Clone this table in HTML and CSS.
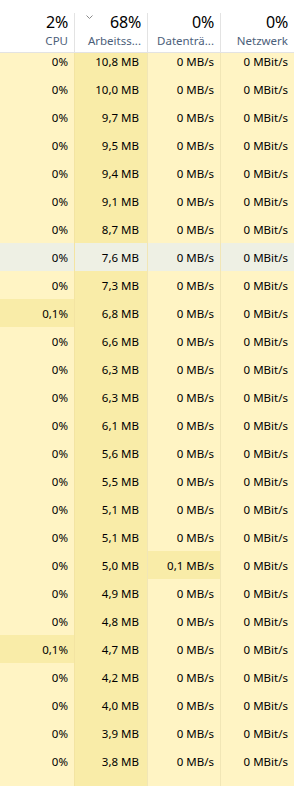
FILE: index.html
```html
<!DOCTYPE html>
<html lang="de">
<head>
<meta charset="utf-8">
<title>Task-Manager</title>
<link rel="stylesheet" href="styles.css">
</head>
<body>
<div class="tm">
  <div class="head">
    <div class="hc">
      <div class="pct">2%</div>
      <div class="lbl">CPU</div>
    </div>
    <div class="hc sep sorted">
      <svg class="chev" width="7" height="4" viewBox="0 0 7 4"><polyline points="0.5,0.5 3.5,3.5 6.5,0.5" fill="none" stroke="#8a8a8a" stroke-width="1"/></svg>
      <div class="pct">68%</div>
      <div class="lbl">Arbeitss...</div>
    </div>
    <div class="hc sep">
      <div class="pct">0%</div>
      <div class="lbl">Datenträ...</div>
    </div>
    <div class="hc sep">
      <div class="pct">0%</div>
      <div class="lbl">Netzwerk</div>
    </div>
  </div>
  <div class="body">
    <div class="rows">
      <div class="row"><div class="c c1">0%</div><div class="c c2">10,8 MB</div><div class="c c3">0 MB/s</div><div class="c c4">0 MBit/s</div></div>
      <div class="row"><div class="c c1">0%</div><div class="c c2">10,0 MB</div><div class="c c3">0 MB/s</div><div class="c c4">0 MBit/s</div></div>
      <div class="row"><div class="c c1">0%</div><div class="c c2">9,7 MB</div><div class="c c3">0 MB/s</div><div class="c c4">0 MBit/s</div></div>
      <div class="row"><div class="c c1">0%</div><div class="c c2">9,5 MB</div><div class="c c3">0 MB/s</div><div class="c c4">0 MBit/s</div></div>
      <div class="row"><div class="c c1">0%</div><div class="c c2">9,4 MB</div><div class="c c3">0 MB/s</div><div class="c c4">0 MBit/s</div></div>
      <div class="row"><div class="c c1">0%</div><div class="c c2">9,1 MB</div><div class="c c3">0 MB/s</div><div class="c c4">0 MBit/s</div></div>
      <div class="row"><div class="c c1">0%</div><div class="c c2">8,7 MB</div><div class="c c3">0 MB/s</div><div class="c c4">0 MBit/s</div></div>
      <div class="row hover"><div class="c c1">0%</div><div class="c c2">7,6 MB</div><div class="c c3">0 MB/s</div><div class="c c4">0 MBit/s</div></div>
      <div class="row"><div class="c c1">0%</div><div class="c c2">7,3 MB</div><div class="c c3">0 MB/s</div><div class="c c4">0 MBit/s</div></div>
      <div class="row"><div class="c c1 hot">0,1%</div><div class="c c2">6,8 MB</div><div class="c c3">0 MB/s</div><div class="c c4">0 MBit/s</div></div>
      <div class="row"><div class="c c1">0%</div><div class="c c2">6,6 MB</div><div class="c c3">0 MB/s</div><div class="c c4">0 MBit/s</div></div>
      <div class="row"><div class="c c1">0%</div><div class="c c2">6,3 MB</div><div class="c c3">0 MB/s</div><div class="c c4">0 MBit/s</div></div>
      <div class="row"><div class="c c1">0%</div><div class="c c2">6,3 MB</div><div class="c c3">0 MB/s</div><div class="c c4">0 MBit/s</div></div>
      <div class="row"><div class="c c1">0%</div><div class="c c2">6,1 MB</div><div class="c c3">0 MB/s</div><div class="c c4">0 MBit/s</div></div>
      <div class="row"><div class="c c1">0%</div><div class="c c2">5,6 MB</div><div class="c c3">0 MB/s</div><div class="c c4">0 MBit/s</div></div>
      <div class="row"><div class="c c1">0%</div><div class="c c2">5,5 MB</div><div class="c c3">0 MB/s</div><div class="c c4">0 MBit/s</div></div>
      <div class="row"><div class="c c1">0%</div><div class="c c2">5,1 MB</div><div class="c c3">0 MB/s</div><div class="c c4">0 MBit/s</div></div>
      <div class="row"><div class="c c1">0%</div><div class="c c2">5,1 MB</div><div class="c c3">0 MB/s</div><div class="c c4">0 MBit/s</div></div>
      <div class="row"><div class="c c1">0%</div><div class="c c2">5,0 MB</div><div class="c c3 hot">0,1 MB/s</div><div class="c c4">0 MBit/s</div></div>
      <div class="row"><div class="c c1">0%</div><div class="c c2">4,9 MB</div><div class="c c3">0 MB/s</div><div class="c c4">0 MBit/s</div></div>
      <div class="row"><div class="c c1">0%</div><div class="c c2">4,8 MB</div><div class="c c3">0 MB/s</div><div class="c c4">0 MBit/s</div></div>
      <div class="row"><div class="c c1 hot">0,1%</div><div class="c c2">4,7 MB</div><div class="c c3">0 MB/s</div><div class="c c4">0 MBit/s</div></div>
      <div class="row"><div class="c c1">0%</div><div class="c c2">4,2 MB</div><div class="c c3">0 MB/s</div><div class="c c4">0 MBit/s</div></div>
      <div class="row"><div class="c c1">0%</div><div class="c c2">4,0 MB</div><div class="c c3">0 MB/s</div><div class="c c4">0 MBit/s</div></div>
      <div class="row"><div class="c c1">0%</div><div class="c c2">3,9 MB</div><div class="c c3">0 MB/s</div><div class="c c4">0 MBit/s</div></div>
      <div class="row"><div class="c c1">0%</div><div class="c c2">3,8 MB</div><div class="c c3">0 MB/s</div><div class="c c4">0 MBit/s</div></div>
      <div class="row"><div class="c c1">0%</div><div class="c c2">3,7 MB</div><div class="c c3">0 MB/s</div><div class="c c4">0 MBit/s</div></div>
    </div>
  </div>
</div>
</body>
</html>
```
FILE: styles.css
```css
html, body {
  margin: 0;
  padding: 0;
  background: #ffffff;
}
body {
  font-family: "Noto Sans", "Open Sans", sans-serif;
  color: #000;
  width: 294px;
  height: 786px;
  overflow: hidden;
}
.tm {
  display: flex;
  flex-direction: column;
  height: 786px;
}
.head {
  display: grid;
  grid-template-columns: 74px 73px 73px 74px;
  height: 52px;
  border-bottom: 1px solid #e3e3e3;
  background: #fff;
  flex: none;
}
.hc {
  position: relative;
  display: flex;
  flex-direction: column;
  align-items: flex-end;
  padding: 12px 6px 0 0;
}
.hc.sep::before {
  content: "";
  position: absolute;
  left: 0;
  top: 13px;
  bottom: 0;
  width: 1px;
  background: #e3e3e3;
}
.pct {
  font-size: 16px;
  line-height: 20px;
  letter-spacing: -0.2px;
}
.lbl {
  margin-top: 1px;
  font-size: 11.5px;
  line-height: 16px;
  color: #4c607a;
  white-space: nowrap;
}
.chev {
  position: absolute;
  left: 12px;
  top: 15px;
}
.body {
  flex: 1;
  overflow: hidden;
}
.rows {
  margin-top: -6px;
}
.row {
  display: grid;
  grid-template-columns: 74px 73px 73px 74px;
  height: 28px;
}
.c {
  display: flex;
  align-items: center;
  justify-content: flex-end;
  font-size: 11.5px;
  padding-right: 6px;
  white-space: nowrap;
  background: #fff4c4;
}
.c2 {
  background: #f9eca8;
  padding-right: 8px;
  border-left: 1px solid #f3e4a2;
}
.c3, .c4 {
  border-left: 1px solid #f1e6b6;
  padding-right: 6px;
}
.c.hot {
  background: #f9eca8;
}
.row.hover .c {
  background: #eef0e4;
}
.row.hover .c2 {
  background: #eef0e4;
}
```
